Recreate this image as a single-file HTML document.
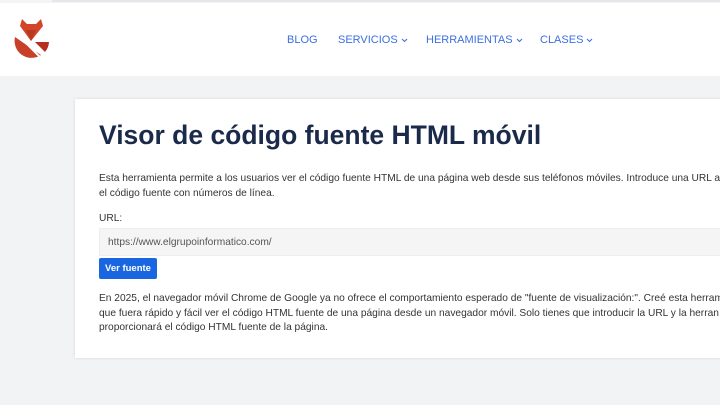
<!DOCTYPE html>
<html><head><style>
body{margin:0;width:720px;height:405px;overflow:hidden;background:#f1f3f5;font-family:"Liberation Sans",sans-serif;position:relative}
.top{position:absolute;left:0;top:0;width:720px;height:3px;background:#f3f4f6}
.top2{position:absolute;left:52px;top:0;width:668px;height:2px;background:#e4e6e9}
.hdr{position:absolute;left:0;top:3px;width:720px;height:73px;background:#fff}
.nav{position:absolute;top:34px;font-size:11px;color:#3b6fe0}
.nav span{position:absolute;white-space:nowrap}
.nav svg{vertical-align:middle;margin-left:3px}
.card{position:absolute;left:75px;top:99px;width:660px;height:259px;background:#fff;box-shadow:0 0 3px rgba(0,0,0,.12)}
h1{position:absolute;left:99px;top:120px;margin:0;font-size:26.5px;font-weight:bold;color:#1b2a4a;white-space:nowrap}
.p{position:absolute;left:99px;font-size:10.2px;color:#333;line-height:14.5px;white-space:nowrap}
.inp{position:absolute;left:99px;top:228px;width:640px;height:28px;background:#f5f5f5;border:1px solid #eee;box-sizing:border-box}
.inp span{position:absolute;left:8px;top:8px;font-size:10.2px;color:#555}
.btn{position:absolute;left:99px;top:258px;width:58px;height:21px;background:#1a66e0;border-radius:2px;color:#fff;font-size:9.5px;font-weight:bold;text-align:center;line-height:21px}
</style></head><body>
<div class="top"></div><div class="top2"></div>
<div class="hdr"></div>
<svg style="position:absolute;left:0;top:0" width="60" height="70" viewBox="0 0 60 70">
<path d="M15,37 A17,17 0 0 0 41,55 Z" fill="#c8402a"/>
<path d="M35,42 L49,42 A17,17 0 0 1 45,52 Z" fill="#b5301f"/>
<polygon points="20,26 22,19 27,24 36,24 41,19 43,26 31,41" fill="#d2452b"/>
<polygon points="26,30 31,41 36,30" fill="#b83822"/>
<path d="M17,34 L42,59" stroke="#fff" stroke-width="2"/>
</svg>
<div class="nav"><span style="left:287px">BLOG</span><span style="left:338px">SERVICIOS<svg width="7" height="5" viewBox="0 0 7 5"><path d="M1,1 L3.5,3.5 L6,1" fill="none" stroke="#3b6fe0" stroke-width="1.1"/></svg></span><span style="left:426px">HERRAMIENTAS<svg width="7" height="5" viewBox="0 0 7 5"><path d="M1,1 L3.5,3.5 L6,1" fill="none" stroke="#3b6fe0" stroke-width="1.1"/></svg></span><span style="left:540px">CLASES<svg width="7" height="5" viewBox="0 0 7 5"><path d="M1,1 L3.5,3.5 L6,1" fill="none" stroke="#3b6fe0" stroke-width="1.1"/></svg></span></div>
<div class="card"></div>
<h1>Visor de código fuente HTML móvil</h1>
<div class="p" style="top:172px">Esta herramienta permite a los usuarios ver el código fuente HTML de una página web desde sus teléfonos móviles. Introduce una URL ab<br>el código fuente con números de línea.</div>
<div class="p" style="top:212px">URL:</div>
<div class="inp"><span>https://www.elgrupoinformatico.com/</span></div>
<div class="btn">Ver fuente</div>
<div class="p" style="top:292px">En 2025, el navegador móvil Chrome de Google ya no ofrece el comportamiento esperado de "fuente de visualización:". Creé esta herram<br>que fuera rápido y fácil ver el código HTML fuente de una página desde un navegador móvil. Solo tienes que introducir la URL y la herran<br>proporcionará el código HTML fuente de la página.</div>
</body></html>
